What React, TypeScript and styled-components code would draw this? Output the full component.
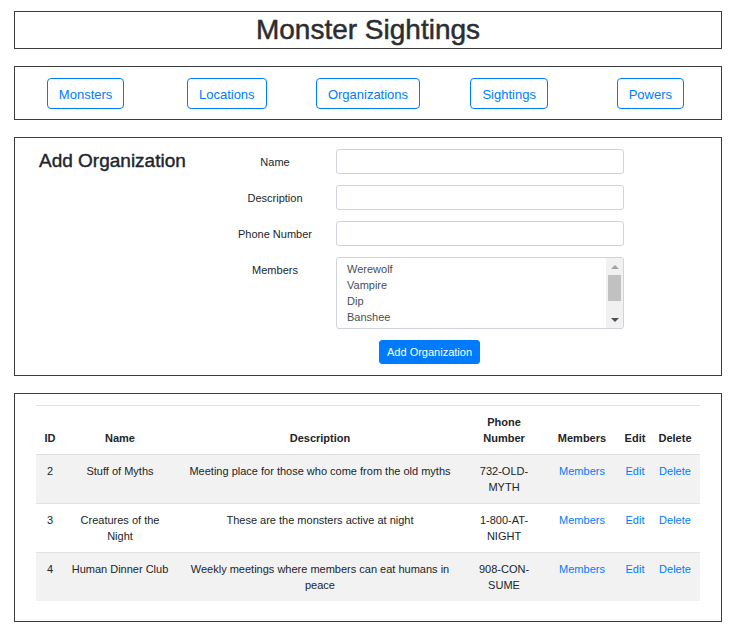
import React from "react"
import styled, { createGlobalStyle } from "styled-components"

const GlobalStyle = createGlobalStyle`
    body {
        margin: 0;
        background: #fff;
        color: #212529;
        font-family: "Liberation Sans", Arial, sans-serif;
    }
`

const links = ["Monsters", "Locations", "Organizations", "Sightings", "Powers"]
const monsters = ["Werewolf", "Vampire", "Dip", "Banshee", "Zombie", "Ghoul"]

const organizations = [
    {
        id: 2,
        name: "Stuff of Myths",
        description: "Meeting place for those who come from the old myths",
        phone: "732-OLD-MYTH",
    },
    {
        id: 3,
        name: "Creatures of the Night",
        description: "These are the monsters active at night",
        phone: "1-800-AT-NIGHT",
    },
    {
        id: 4,
        name: "Human Dinner Club",
        description: "Weekly meetings where members can eat humans in peace",
        phone: "908-CON-SUME",
    },
]

// column widths of the organizations table
const columns = [28, 112, 288, 80, 76, 30, 50]

const App = () => {
    return (
        <>
            <GlobalStyle />
            <SPage>
                <STitlePanel>
                    <STitle>Monster Sightings</STitle>
                </STitlePanel>

                <SNavPanel>
                    {links.map((link) => (
                        <SNavCell key={link}>
                            <SNavButton type="button">{link}</SNavButton>
                        </SNavCell>
                    ))}
                </SNavPanel>

                <SFormPanel>
                    <SHeading>Add Organization</SHeading>
                    <SForm onSubmit={(e) => e.preventDefault()}>
                        <SField>
                            <SLabel>Name</SLabel>
                            <SInput type="text" />
                        </SField>
                        <SField>
                            <SLabel>Description</SLabel>
                            <SInput type="text" />
                        </SField>
                        <SField>
                            <SLabel>Phone Number</SLabel>
                            <SInput type="text" />
                        </SField>
                        <SField $top>
                            <SLabel $top>Members</SLabel>
                            <SListBox>
                                <SOptions>
                                    {monsters.slice(0, 4).map((m) => (
                                        <SOption key={m}>{m}</SOption>
                                    ))}
                                </SOptions>
                                <SScrollbar>
                                    <SArrow $up />
                                    <STrack>
                                        <SThumb />
                                    </STrack>
                                    <SArrow />
                                </SScrollbar>
                            </SListBox>
                        </SField>
                        <SField>
                            <span />
                            <SSubmit type="submit">Add Organization</SSubmit>
                        </SField>
                    </SForm>
                </SFormPanel>

                <STablePanel>
                    <STable>
                        <colgroup>
                            {columns.map((w, i) => (
                                <col key={i} style={{ width: w }} />
                            ))}
                        </colgroup>
                        <thead>
                            <tr>
                                <STh>ID</STh>
                                <STh>Name</STh>
                                <STh>Description</STh>
                                <STh>Phone Number</STh>
                                <STh>Members</STh>
                                <STh>Edit</STh>
                                <STh>Delete</STh>
                            </tr>
                        </thead>
                        <tbody>
                            {organizations.map((org, i) => (
                                <STr key={org.id} $striped={i % 2 === 0}>
                                    <STd>{org.id}</STd>
                                    <STd>{org.name}</STd>
                                    <STd>{org.description}</STd>
                                    <STd>{org.phone}</STd>
                                    <STd>
                                        <SLink href="#">Members</SLink>
                                    </STd>
                                    <STd>
                                        <SLink href="#">Edit</SLink>
                                    </STd>
                                    <STd>
                                        <SLink href="#">Delete</SLink>
                                    </STd>
                                </STr>
                            ))}
                        </tbody>
                    </STable>
                </STablePanel>
            </SPage>
        </>
    )
}

export default App

const SPage = styled.div`
    display: flex;
    flex-direction: column;
    gap: 17px;
    width: 708px;
    padding: 11px 0 0 14px;
`

const SPanel = styled.div`
    border: 1px solid #3a3d40;
    box-sizing: border-box;
`

const STitlePanel = styled(SPanel)`
    height: 38px;
`

const STitle = styled.h1`
    margin: 0;
    font-size: 28px;
    font-weight: 500;
    line-height: 36px;
    text-align: center;
    color: #2b2e31;
    -webkit-text-stroke: 0.5px #2b2e31; // medium weight look
`

const SNavPanel = styled(SPanel)`
    display: grid;
    grid-template-columns: repeat(5, 1fr);
    height: 54px;
    padding-top: 11px;
`

const SNavCell = styled.div`
    display: flex;
    justify-content: center;
    align-items: flex-start;
`

const SNavButton = styled.button`
    height: 31px;
    padding: 1px 11px 0;
    border: 1px solid #007bff;
    border-radius: 4px;
    background: #fff;
    color: #007bff;
    font-family: "Liberation Sans", Arial, sans-serif;
    font-size: 13px;
    cursor: pointer;
`

const SFormPanel = styled(SPanel)`
    display: grid;
    grid-template-columns: 181px 1fr;
    padding: 11px 24px 11px 24px;
`

const SHeading = styled.h2`
    margin: 0;
    font-size: 19px;
    font-weight: 500;
    line-height: 24px;
    color: #212529;
    -webkit-text-stroke: 0.4px #212529;
`

const SForm = styled.form`
    display: flex;
    flex-direction: column;
    gap: 11px;
`

const SField = styled.div<{ $top?: boolean }>`
    display: grid;
    grid-template-columns: 110px 288px;
    column-gap: 6px;
    align-items: ${(p) => (p.$top ? "start" : "center")};
`

const SLabel = styled.label<{ $top?: boolean }>`
    font-size: 11px;
    line-height: 16px;
    text-align: center;
    color: #212529;
    padding-top: ${(p) => (p.$top ? "5px" : "0")};
`

const SInput = styled.input`
    box-sizing: border-box;
    height: 25px;
    width: 100%;
    border: 1px solid #ced4da;
    border-radius: 3px;
    padding: 0 10px;
    font-family: inherit;
    font-size: 11px;
    color: #495057;
`

const SListBox = styled.div`
    display: flex;
    box-sizing: border-box;
    height: 72px;
    border: 1px solid #ced4da;
    border-radius: 3px;
    overflow: hidden;
`

const SOptions = styled.ul`
    flex: 1;
    margin: 0;
    padding: 3px 10px;
    list-style: none;
`

const SOption = styled.li`
    font-size: 11px;
    line-height: 16px;
    color: #495057;
`

const SScrollbar = styled.div`
    display: flex;
    flex-direction: column;
    width: 17px;
    background: #f1f1f1;
`

const SArrow = styled.div<{ $up?: boolean }>`
    height: 17px;
    display: flex;
    justify-content: center;
    align-items: center;

    &::before {
        content: "";
        border-left: 4px solid transparent;
        border-right: 4px solid transparent;
        ${(p) => (p.$up ? "border-bottom: 4px solid #a3a3a3;" : "border-top: 4px solid #505050;")}
    }
`

const STrack = styled.div`
    flex: 1;
    padding: 0 2px;
`

const SThumb = styled.div`
    height: 26px;
    background: #c1c1c1;
`

const SSubmit = styled.button`
    justify-self: start;
    margin-left: 43px;
    height: 24px;
    padding: 0 7px;
    border: 1px solid #007bff;
    border-radius: 3px;
    background: #007bff;
    color: #fff;
    font-family: "Liberation Sans", Arial, sans-serif;
    font-size: 11px;
    cursor: pointer;
`

const STablePanel = styled(SPanel)`
    padding: 11px 21px 20px;
`

const STable = styled.table`
    width: 664px;
    table-layout: fixed;
    border-collapse: collapse;
    font-size: 11px;
    line-height: 16px;
    color: #212529;
`

const STh = styled.th`
    padding: 8px 4px;
    border-top: 1px solid #dee2e6;
    border-bottom: 1px solid #dee2e6;
    font-weight: 700;
    text-align: center;
    vertical-align: bottom;
`

const STr = styled.tr<{ $striped: boolean }>`
    background: ${(p) => (p.$striped ? "#f2f2f2" : "transparent")};
`

const STd = styled.td`
    padding: 8px 4px;
    border-top: 1px solid #dee2e6;
    text-align: center;
    vertical-align: top;
`

const SLink = styled.a`
    color: #007bff;
    text-decoration: none;
`
